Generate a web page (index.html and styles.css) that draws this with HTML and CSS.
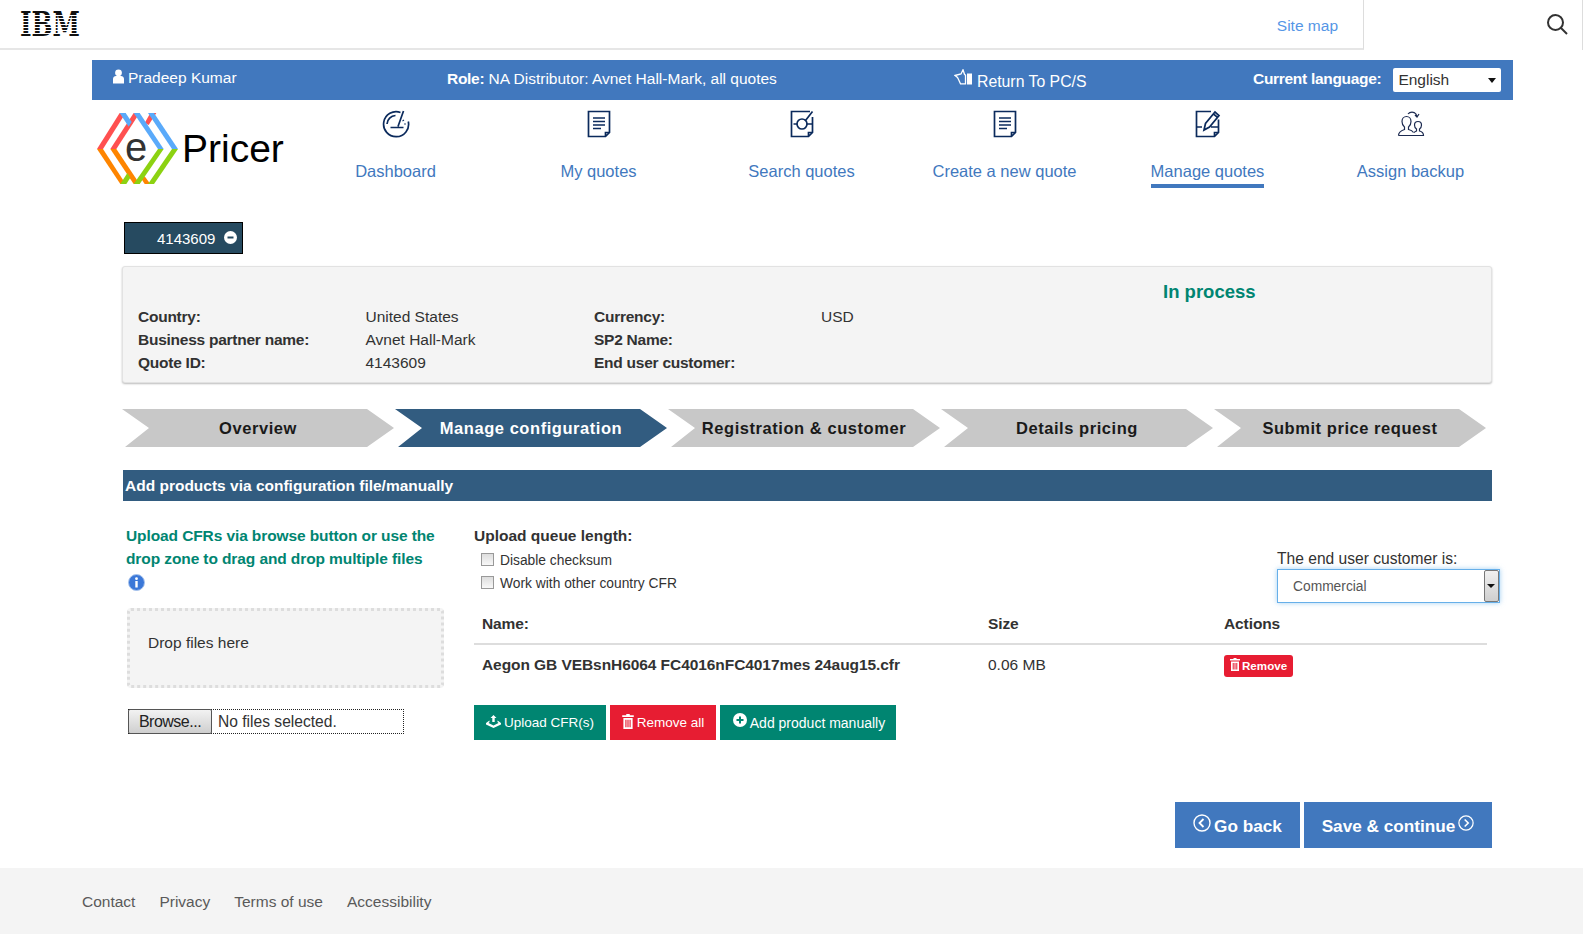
FILE: index.html
```html
<!DOCTYPE html>
<html lang="en">
<head>
    <meta charset="UTF-8">
    <meta name="viewport" content="width=device-width, initial-scale=1.0">
    <title>ePricer - Manage configuration</title>
    <link rel="stylesheet" href="styles.css">
</head>
<body>
    <header class="topbar">
        <div class="topbar-main">
            <div class="ibm-logo">IBM</div>
            <a class="sitemap" href="#">Site map</a>
        </div>
        <div class="topbar-search">
            <svg width="22" height="22" viewBox="0 0 22 22" fill="none" stroke="#323232" stroke-width="2"><circle cx="9.5" cy="9.5" r="7.5"/><path d="M15 15l6 6"/></svg>
        </div>
    </header>

    <div class="userbar">
        <div class="user-name">
            <svg width="13" height="15" viewBox="0 0 13 15" fill="#fff"><circle cx="6.5" cy="3.8" r="3.4"/><path d="M1 14.5V10c0-2 1.5-3 3-3h5c1.500 0 3 1 3 3v4.500z"/></svg>
            <span>Pradeep Kumar</span>
        </div>
        <div class="user-role"><b>Role:</b> NA Distributor: Avnet Hall-Mark, all quotes</div>
        <div class="user-return">
            <svg width="19" height="18" viewBox="0 0 19 18"><path d="M1 6.500l6-1.500L9 .8l1.500 4.500 1 1v8.500H6.500L5 11.500l-1.500-3z" fill="none" stroke="#fff" stroke-width="1.300"/><rect x="13" y="4.500" width="5" height="11" fill="#fff"/></svg>
            <span>Return To PC/S</span>
        </div>
        <div class="user-lang">
            <b>Current language:</b>
            <div class="lang-select">
                <select><option>English</option></select>
            </div>
        </div>
    </div>

    <nav class="mainnav">
        <a class="logo" href="#">
            <svg width="190" height="76" viewBox="0 0 570 228">
                <g fill="#ff5050">
                    <path d="M0 108L68 0h18L18 108z"/>
                    <path d="M40 108L110 0h18L58 108z"/>
                    <path d="M143 30L160 0h18L155 36z"/>
                </g>
                <g fill="#5aaafa">
                    <path d="M68 0h18l18 27-9 14z"/>
                    <path d="M110 0h18l72 108h-17z"/>
                    <path d="M153 0h18l72 108h-18z"/>
                </g>
                <g fill="#fe8500">
                    <path d="M0 108h18l68 105H70z"/>
                    <path d="M40 108h18l70 105h-18z"/>
                    <path d="M143 190l17 23h-17l-9-14z"/>
                </g>
                <g fill="#8cd211">
                    <path d="M183 108h17l-72 105h-18z"/>
                    <path d="M225 108h18l-72 105h-18z"/>
                    <path d="M70 213h18l12-19-9-14z"/>
                </g>
                <text class="logo-e" x="84" y="145">e</text>
                <text class="logo-name" x="255" y="148">Pricer</text>
            </svg>
        </a>
        <div class="nav-items">
            <a class="nav-item" href="#">
                <svg class="nav-icon" width="28" height="28" viewBox="0 0 28 28"><path d="M18.500 2.500A12.500 12.500 0 1 0 26.300 11.500"/><path d="M5 14a9 9 0 0 1 8.500-8.500M21.500 1L16 16.500M8.500 17.500h13M21 10l.5 1M23 13.500v1"/></svg>
                <span>Dashboard</span>
            </a>
            <a class="nav-item" href="#">
                <svg class="nav-icon" width="28" height="28" viewBox="0 0 28 28"><path d="M3.500 1.500h21v21l-4 4h-17zM24.500 22.500h-4v4"/><path d="M8 8h12M8 11.500h12M8 15h12M8 18.500h8"/></svg>
                <span>My quotes</span>
            </a>
            <a class="nav-item" href="#">
                <svg class="nav-icon" width="28" height="28" viewBox="0 0 28 28"><path d="M22 1.500H3.500v25h17l4-4V7M24.500 22.500h-4v4"/><circle cx="14" cy="14" r="5"/><path d="M17.500 10.500l7-9M5.500 14H9M19 14h5"/></svg>
                <span>Search quotes</span>
            </a>
            <a class="nav-item" href="#">
                <svg class="nav-icon" width="28" height="28" viewBox="0 0 28 28"><path d="M3.500 1.500h21v21l-4 4h-17zM24.500 22.500h-4v4"/><path d="M8 8h12M8 11.500h12M8 15h12M8 18.500h8"/></svg>
                <span>Create a new quote</span>
            </a>
            <a class="nav-item active" href="#">
                <svg class="nav-icon" width="28" height="28" viewBox="0 0 28 28"><path d="M17 1.500H2.500v25h18l4-4v-13M24.500 22.500h-4v4"/><path d="M2.500 17H8M17 17h7M10 20l1.500-6.500L21 2l4 3.500-9.500 11.500zM19.500 4l4 3.300"/></svg>
                <span>Manage quotes</span>
            </a>
            <a class="nav-item" href="#">
                <svg class="nav-icon icon-thin" width="28" height="28" viewBox="0 0 28 28"><path d="M1.500 25.500c0-3 3-5 6-6v-2.500c-2-1.500-2.500-3.500-2.500-5.500 0-3 2-5 4.500-5s4.500 2 4.500 5c0 2-.5 4-2.500 5.500v2.500c2 .5 4 1.500 5 3M1.500 25.500h25c0-2.500-2-4-4-4.500v-2c1.500-1 2-2.500 2-4 0-2-1.500-3.500-3.500-3.500s-3.500 1.500-3.500 3.500c0 1.500.5 3 2 4v2c-1 .5-2 1-2.500 1.500"/><path d="M11 4c2-2.500 6-2.500 8 0l1 3M22 4l-2 3-2-2"/></svg>
                <span>Assign backup</span>
            </a>
        </div>
    </nav>

    <main class="content">
        <div class="quote-tag">
            <span>4143609</span>
            <svg width="13" height="13" viewBox="0 0 13 13"><circle cx="6.500" cy="6.500" r="6.500" fill="#fff"/><rect x="3.500" y="5.500" width="6" height="2" fill="#264a60"/></svg>
        </div>

        <section class="quote-panel">
            <div class="quote-status">In process</div>
            <div class="quote-info">
                <b>Country:</b><span>United States</span><b>Currency:</b><span>USD</span>
                <b>Business partner name:</b><span>Avnet Hall-Mark</span><b>SP2 Name:</b><span></span>
                <b>Quote ID:</b><span>4143609</span><b>End user customer:</b><span></span>
            </div>
        </section>

        <div class="steps">
            <div class="step">Overview</div>
            <div class="step current">Manage configuration</div>
            <div class="step">Registration &amp; customer</div>
            <div class="step">Details pricing</div>
            <div class="step">Submit price request</div>
        </div>

        <h2 class="section-title">Add products via configuration file/manually</h2>

        <div class="upload-area">
            <div class="upload-left">
                <p class="upload-hint">Upload CFRs via browse button or use the drop zone to drag and drop multiple files</p>
                <svg class="info-icon" width="17" height="17" viewBox="0 0 17 17"><circle cx="8.500" cy="8.500" r="8" fill="#3b78d8" stroke="#a9c4ec"/><rect x="7.300" y="7" width="2.400" height="6.500" fill="#fff"/><circle cx="8.500" cy="4.700" r="1.400" fill="#fff"/></svg>
                <div class="dropzone">Drop files here</div>
                <div class="file-input">
                    <button type="button">Browse...</button>
                    <span>No files selected.</span>
                </div>
            </div>

            <div class="upload-right">
                <div class="upload-top">
                    <div class="queue">
                        <h3>Upload queue length:</h3>
                        <label class="check"><input type="checkbox"> Disable checksum</label>
                        <label class="check"><input type="checkbox"> Work with other country CFR</label>
                    </div>
                    <div class="customer-type">
                        <label>The end user customer is:</label>
                        <div class="customer-select">
                            <span>Commercial</span>
                            <i class="select-btn"></i>
                        </div>
                    </div>
                </div>

                <table class="files">
                    <thead>
                        <tr><th class="col-name">Name:</th><th class="col-size">Size</th><th>Actions</th></tr>
                    </thead>
                    <tbody>
                        <tr>
                            <td><b>Aegon GB VEBsnH6064 FC4016nFC4017mes 24aug15.cfr</b></td>
                            <td>0.06 MB</td>
                            <td>
                                <a class="badge-remove" href="#">
                                    <svg width="10" height="13" viewBox="0 0 10 13" fill="#fff"><path d="M3.500 0h3v1H10v1.500H0V1h3.500zM1 3.500h8V13H1zM2.700 5v6.500h1V5zM4.500 5v6.500h1V5zM6.300 5v6.500h1V5z" fill-rule="evenodd"/></svg>
                                    Remove
                                </a>
                            </td>
                        </tr>
                    </tbody>
                </table>

                <div class="file-actions">
                    <a class="btn btn-green" href="#">
                        <svg width="15" height="13" viewBox="0 0 15 13" fill="#fff"><path d="M7.500 0l3 3H8.700v4H6.300V3H4.500zM0 8l3.500-2.500V7L2.500 8l5 2.500 5-2.500-1-1V5.500L15 8v1.500L7.500 13 0 9.500z"/></svg>
                        Upload CFR(s)
                    </a>
                    <a class="btn btn-red" href="#">
                        <svg width="12" height="15" viewBox="0 0 10 13" fill="#fff"><path d="M3.500 0h3v1H10v1.500H0V1h3.500zM1 3.500h8V13H1zM2.700 5v6.500h1V5zM4.500 5v6.500h1V5zM6.300 5v6.500h1V5z" fill-rule="evenodd"/></svg>
                        Remove all
                    </a>
                    <a class="btn btn-green btn-add" href="#">
                        <svg width="14" height="14" viewBox="0 0 14 14"><circle cx="7" cy="7" r="7" fill="#fff"/><path d="M3.500 7h7M7 3.500v7" stroke="#008571" stroke-width="2"/></svg>
                        Add product manually
                    </a>
                </div>
            </div>
        </div>

        <div class="page-actions">
            <a class="btn-page back" href="#">
                <svg width="18" height="18" viewBox="0 0 18 18" fill="none" stroke="#fff" stroke-width="1.400"><circle cx="9" cy="9" r="8"/><path d="M10.500 5l-4 4 4 4" stroke-width="1.800"/></svg>
                Go back
            </a>
            <a class="btn-page next" href="#">
                Save &amp; continue
                <svg width="16" height="16" viewBox="0 0 18 18" fill="none" stroke="#fff" stroke-width="1.400"><circle cx="9" cy="9" r="8"/><path d="M7.500 5l4 4-4 4" stroke-width="1.800"/></svg>
            </a>
        </div>
    </main>

    <footer class="footer">
        <a href="#">Contact</a>
        <a href="#">Privacy</a>
        <a href="#">Terms of use</a>
        <a href="#">Accessibility</a>
    </footer>
</body>
</html>
```

FILE: styles.css
```css
* { box-sizing: border-box; }
html, body { margin: 0; padding: 0; }
body {
    font-family: "Liberation Sans", Arial, sans-serif;
    font-size: 15px;
    color: #323232;
    background: #fff;
    overflow: hidden;
}
a { text-decoration: none; color: inherit; }

/* top strip */
.topbar { display: flex; height: 50px; }
.topbar-main {
    width: 1364px;
    display: flex;
    justify-content: space-between;
    align-items: center;
    border-right: 1px solid #ddd;
    border-bottom: 2px solid #e6e6e6;
    padding: 0 25px 0 20px;
}
.topbar-search {
    flex: 1;
    display: flex;
    justify-content: flex-end;
    align-items: center;
    padding: 0 14px 2px 0;
    border-right: 1px solid #ddd;
}
.ibm-logo {
    position: relative;
    width: 58px;
    height: 24px;
    margin-top: 2px;
    font-family: "DejaVu Serif", serif;
    font-weight: bold;
    font-size: 33px;
    line-height: 24px;
    color: #111;
    transform: scaleX(.75);
    transform-origin: left center;
}
.ibm-logo::after {
    content: "";
    position: absolute;
    inset: 0 -30px 0 0;
    background: repeating-linear-gradient(to bottom, transparent 0, transparent 2px, #fff 2px, #fff 3px);
}
.sitemap { color: #5596e6; font-size: 15.500px; padding-top: 3px; }

/* user bar */
.userbar {
    display: flex;
    align-items: center;
    height: 40px;
    margin: 10px 70px 0 92px;
    padding-left: 20px;
    background: #4178be;
    color: #fff;
    font-size: 15.500px;
}
.user-name { width: 335px; display: flex; gap: 3px; align-items: center; padding-bottom: 5px; }
.user-name svg { margin-top: -3px; }
.user-role { width: 507px; padding-bottom: 3px; }
.user-role b { letter-spacing: -.3px; }
.user-return { width: 299px; display: flex; align-items: center; gap: 4px; padding-top: 3px; font-size: 15.800px; }
.user-return svg { margin-top: -7px; }
.user-lang { display: flex; align-items: center; gap: 12px; }
.user-lang b { letter-spacing: -.3px; margin-top: -3px; }
.lang-select { position: relative; width: 108px; height: 24px; margin-top: -1px; }
.lang-select select {
    appearance: none;
    width: 100%;
    height: 100%;
    border: 0;
    border-radius: 2px;
    background: #fff;
    color: #323232;
    font: 15.500px "Liberation Sans", Arial, sans-serif;
    padding: 0 0 0 5px;
}
.lang-select::after {
    content: "";
    position: absolute;
    right: 5px;
    top: 10px;
    border: 4px solid transparent;
    border-top: 5px solid #111;
    border-bottom: 0;
}

/* logo + main nav */
.mainnav { display: flex; height: 122px; margin-left: 97px; }
.logo { display: block; width: 197px; padding-top: 13px; }
.logo svg { display: block; }
.logo-e { font-size: 120px; fill: #333; }
.logo-name { font-size: 117px; fill: #000; }
.nav-items { display: grid; grid-template-columns: repeat(6, 203px); }
.nav-item {
    display: flex;
    flex-direction: column;
    align-items: center;
    padding-top: 10px;
    color: #4178be;
    font-size: 16.500px;
}
.nav-item span { margin-top: 23px; line-height: 20px; padding-bottom: 3px; }
.nav-item.active span { border-bottom: 4px solid #4178be; }
.nav-icon { fill: none; stroke: #0b2a5c; stroke-width: 1.700; }
.icon-thin { stroke-width: 1.200; stroke: #1c2a50; }

/* page body */
.content { margin: 0 91px 0 124px; }
.quote-tag {
    display: flex;
    align-items: center;
    width: 119px;
    height: 32px;
    padding: 1px 0 0 32px;
    gap: 9px;
    background: #264a60;
    border: 1px solid #000;
    color: #fff;
}
.quote-tag svg { margin-top: -3px; }

.quote-panel {
    margin: 12px 0 0 -2px;
    height: 117px;
    padding: 12px 15px 0;
    background: #f4f4f4;
    border: 1px solid #e2e2e2;
    border-radius: 3px;
    box-shadow: 0 1px 2px #bbb;
}
.quote-status {
    padding-left: 1025px;
    height: 26px;
    line-height: 26px;
    font-size: 18.500px;
    font-weight: bold;
    color: #008571;
}
.quote-info {
    display: grid;
    grid-template-columns: 227.500px 228.500px 227px 1fr;
    grid-auto-rows: 23px;
    line-height: 23px;
    font-size: 15.500px;
}
.quote-info b { letter-spacing: -.25px; }

.steps { display: flex; gap: 1px; margin: 26px 0 0 -2px; }
.step {
    width: 272px;
    height: 38px;
    display: flex;
    align-items: center;
    justify-content: center;
    background: #c8c8c8;
    color: #1a1a1a;
    font-size: 16.500px;
    font-weight: bold;
    letter-spacing: .55px;
    clip-path: polygon(0 0, 245px 0, 100% 50%, 245px 100%, 3px 100%, 27px 50%);
}
.step.current { background: #325c80; color: #fff; }

.section-title {
    margin: 23px 0 0 -1px;
    height: 31px;
    padding: 0 2px;
    line-height: 31px;
    font-size: 15.500px;
    background: #325c80;
    color: #fff;
}

.upload-area { display: flex; gap: 30px; padding: 23px 0 0 3px; }
.upload-left { width: 317px; }
.upload-hint {
    margin: 0 0 0 -1px;
    line-height: 23px;
    font-size: 15.500px;
    font-weight: bold;
    letter-spacing: -.1px;
    color: #008571;
}
.info-icon { display: block; margin: 4px 0 0 1px; }
.dropzone {
    height: 80px;
    margin-top: 17px;
    padding: 21px 18px;
    line-height: 22px;
    font-size: 15.500px;
    background: #f4f4f4;
    border: 3px dotted #ddd;
    border-radius: 4px;
}
.file-input {
    display: flex;
    align-items: center;
    width: 276px;
    height: 25px;
    margin: 21px 0 0 1px;
    border: 1px dotted #222;
    font-size: 15.600px;
}
.file-input button {
    width: 84px;
    height: 25px;
    margin: -1px 6px -1px -1px;
    padding: 0;
    border: 1px solid #555;
    border-radius: 2px;
    background: linear-gradient(#f2f2f2, #cfcfcf);
    font: 16px "Liberation Sans", Arial, sans-serif;
    letter-spacing: -.5px;
    color: #222;
}

.upload-right { width: 1018px; }
.upload-top { display: flex; justify-content: space-between; height: 84px; }
.queue h3 { margin: 0 0 2px; line-height: 23px; font-size: 15.500px; }
.check {
    display: flex;
    align-items: center;
    gap: 6px;
    height: 23px;
    padding-left: 7px;
    font-size: 13.800px;
}
.check input {
    appearance: none;
    width: 13px;
    height: 13px;
    margin: 0 0 3px;
    border: 1px solid #999;
    background: linear-gradient(#ddd, #f8f8f8);
}
.customer-type { width: 223px; margin: 25px -8px 0 0; }
.customer-type label { display: block; height: 20px; line-height: 20px; font-size: 15.600px; }
.customer-select {
    position: relative;
    display: flex;
    align-items: center;
    height: 34px;
    padding-left: 15px;
    font-size: 13.800px;
    color: #555;
    border: 1px solid #66afe9;
    box-shadow: 0 0 5px rgba(102, 175, 233, .6);
}
.select-btn {
    position: absolute;
    top: 0;
    right: 0;
    width: 15px;
    height: 32px;
    background: linear-gradient(#f0f0f0, #cfcfcf);
    border: 1px solid #777;
    border-radius: 2px;
}
.select-btn::after {
    content: "";
    position: absolute;
    left: 2px;
    top: 13px;
    border: 4px solid transparent;
    border-top: 4px solid #111;
    border-bottom: 0;
}

.files { width: 1013px; border-collapse: collapse; table-layout: fixed; }
.files th {
    height: 36px;
    padding: 0 8px 3px;
    text-align: left;
    font-size: 15.500px;
    letter-spacing: -.1px;
    border-bottom: 2px solid #ddd;
}
.files td { height: 44px; padding: 0 8px 4px; font-size: 15.500px; }
.files td:last-child { padding-bottom: 2px; }
.files td b { letter-spacing: -.07px; }
.col-name { width: 506px; }
.col-size { width: 236px; }
.badge-remove {
    display: inline-flex;
    align-items: center;
    gap: 2px;
    height: 22px;
    padding: 0 6px;
    vertical-align: middle;
    border-radius: 3px;
    background: #e71d32;
    color: #fff;
    font-size: 11.600px;
    font-weight: bold;
}
.badge-remove svg { margin-top: -2px; }

.file-actions { display: flex; gap: 4px; margin-top: 17px; }
.btn {
    display: flex;
    align-items: center;
    justify-content: center;
    gap: 3px;
    height: 35px;
    color: #fff;
    font-size: 13.500px;
}
.btn svg { margin-top: -3px; }
.btn-green { width: 132px; background: #008571; }
.btn-red { width: 106px; background: #e71d32; }
.btn-add { width: 176px; font-size: 14px; padding: 1px 0 0 2px; }
.btn-add svg { margin-top: -6px; }

.page-actions { display: flex; justify-content: flex-end; gap: 4px; margin-top: 62px; }
.btn-page {
    display: flex;
    align-items: center;
    justify-content: center;
    gap: 3px;
    height: 46px;
    padding-top: 2px;
    background: #4178be;
    color: #fff;
    font-size: 17.200px;
    font-weight: bold;
}
.btn-page svg { margin-top: -6px; }
.back { width: 125px; }
.next { width: 188px; }

.footer {
    display: flex;
    gap: 24px;
    align-items: center;
    height: 66px;
    margin-top: 20px;
    padding: 2px 0 0 82px;
    font-size: 15.500px;
    background: #f4f4f4;
    color: #5a5a5a;
}
```
